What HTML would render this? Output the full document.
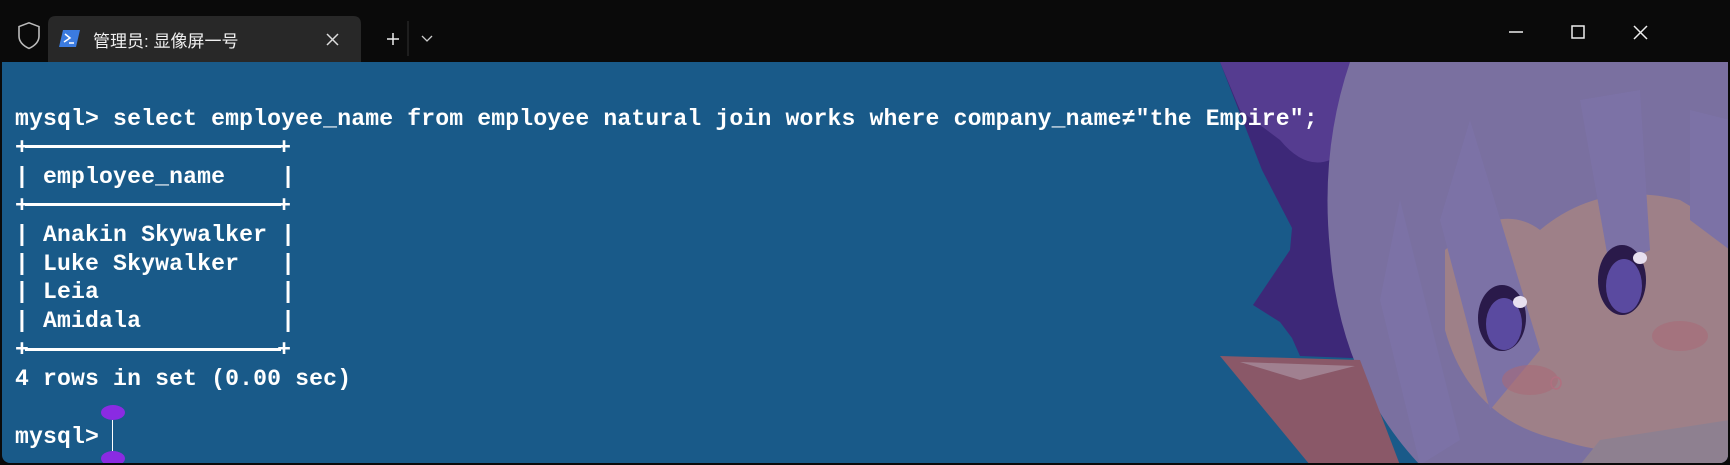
<!DOCTYPE html>
<html><head><meta charset="utf-8"><style>
html,body{margin:0;padding:0;background:#0b0b0b;}
#w{position:relative;width:1730px;height:465px;overflow:hidden;background:#0a0a0a;}
#term{position:absolute;left:2px;top:62px;width:1726px;height:401px;background:#195a89;border-radius:0 0 8px 8px;overflow:hidden;}
pre{position:absolute;left:13px;top:43px;margin:0;font-family:"Liberation Mono","DejaVu Sans Mono",monospace;font-weight:bold;font-size:23.1px;letter-spacing:0.15px;line-height:28.9px;color:#fff;}
.ln{display:inline-block;width:18.5ch;border-top:3px solid #fff;vertical-align:middle;margin:0 -0.3ch;position:relative;top:-1px;}
.t{position:absolute;color:#fff;}
</style></head><body><div id="w">
<svg style="position:absolute;left:0;top:0" width="1730" height="62">
<path d="M25 28 L35 24 L35 24 L45 28 L45 38 Q45 46 35 51 Q25 46 25 38 Z" transform="translate(-6,0) scale(1,0.95)" fill="none" stroke="#bbb" stroke-width="1.6"/>
<path d="M48 62 L48 24 Q48 16 56 16 L353 16 Q361 16 361 24 L361 62 Z" fill="#282828"/>
<path d="M63 30 L80 30 L76 47 L59 47 Z" fill="#3b7be0"/>
<path d="M65 34 L70 38 L64 42 M69 43 L74 43" fill="none" stroke="#fff" stroke-width="1.5"/>
<path d="M327 34 L338 45 M338 34 L327 45" stroke="#ddd" stroke-width="1.5"/>
<path d="M387 39 L399 39 M393 33 L393 45" stroke="#eee" stroke-width="1.5"/>
<path d="M408 21 L408 56" stroke="#333" stroke-width="1"/>
<path d="M422 36 L427 41 L432 36" fill="none" stroke="#ccc" stroke-width="1.3"/>
<path d="M1509 32 L1523 32" stroke="#eee" stroke-width="1.5"/>
<path d="M1572 26 L1584 26 L1584 38 L1572 38 Z" fill="none" stroke="#eee" stroke-width="1.5"/>
<path d="M1634 26 L1647 39 M1647 26 L1634 39" stroke="#eee" stroke-width="1.5"/>
</svg>
<div class="t" style="left:93px;top:27px;font:17px 'Liberation Sans','Noto Sans CJK SC',sans-serif;color:#f0f0f0">管理员: 显像屏一号</div>
<div id="term">
<svg style="position:absolute;left:-2px;top:-62px" width="1730" height="465">
<path d="M1220 62 L1420 62 L1400 360 L1300 356 L1292 338 L1280 322 L1253 305 L1290 250 L1292 228 L1262 170 Z" fill="#3d2878"/>
<path d="M1220 62 L1380 62 L1330 160 Q1305 170 1280 140 L1240 110 Z" fill="#553c90"/>
<path d="M1350 62 L1730 62 L1730 465 L1420 465 Q1340 380 1330 250 Q1320 150 1350 62 Z" fill="#7a70a0"/>
<path d="M1220 356 L1360 360 L1400 465 L1310 465 Z" fill="#8a5868"/>
<path d="M1240 362 L1355 366 L1300 380 Z" fill="#a08090"/>
<path d="M1445 250 Q1500 200 1540 230 Q1600 180 1680 200 L1730 230 L1730 420 Q1650 470 1560 440 Q1470 420 1445 330 Z" fill="#9e8088"/>
<path d="M1470 120 L1540 350 L1490 410 L1440 220 Z M1580 100 L1610 270 L1650 250 L1640 90 Z M1690 110 L1730 120 L1730 250 L1690 220 Z M1400 200 L1460 440 L1420 465 L1380 300 Z" fill="#7c72a6"/>
<ellipse cx="1502" cy="318" rx="24" ry="33" fill="#2a1a4a"/>
<ellipse cx="1504" cy="324" rx="18" ry="26" fill="#5a4aa0"/>
<ellipse cx="1520" cy="302" rx="7" ry="6" fill="#e8e0f0"/>
<ellipse cx="1622" cy="280" rx="24" ry="35" fill="#2a1a4a"/>
<ellipse cx="1624" cy="286" rx="18" ry="27" fill="#5a4aa0"/>
<ellipse cx="1640" cy="258" rx="7" ry="6" fill="#e8e0f0"/>
<ellipse cx="1530" cy="380" rx="28" ry="15" fill="#a86a78" opacity=".6"/>
<ellipse cx="1680" cy="336" rx="28" ry="15" fill="#a86a78" opacity=".6"/>
<ellipse cx="1556" cy="383" rx="5" ry="6" fill="none" stroke="#b07080" stroke-width="1.5"/>
<path d="M1600 440 L1730 420 L1730 465 L1580 465 Z" fill="#8e8090"/>
</svg>
<pre>mysql&gt; select employee_name from employee natural join works where company_name≠"the Empire";
+<span class="ln"></span>+
| employee_name    |
+<span class="ln"></span>+
| Anakin Skywalker |
| Luke Skywalker   |
| Leia             |
| Amidala          |
+<span class="ln"></span>+
4 rows in set (0.00 sec)

mysql&gt; </pre>
<div style="position:absolute;left:110px;top:358px;width:1px;height:32px;background:#fff"></div>
<div style="position:absolute;left:99px;top:343px;width:24px;height:15px;border-radius:50%;background:#8a2be2"></div>
<div style="position:absolute;left:99px;top:389px;width:24px;height:15px;border-radius:50%;background:#8a2be2"></div>
</div>
</div></body></html>
